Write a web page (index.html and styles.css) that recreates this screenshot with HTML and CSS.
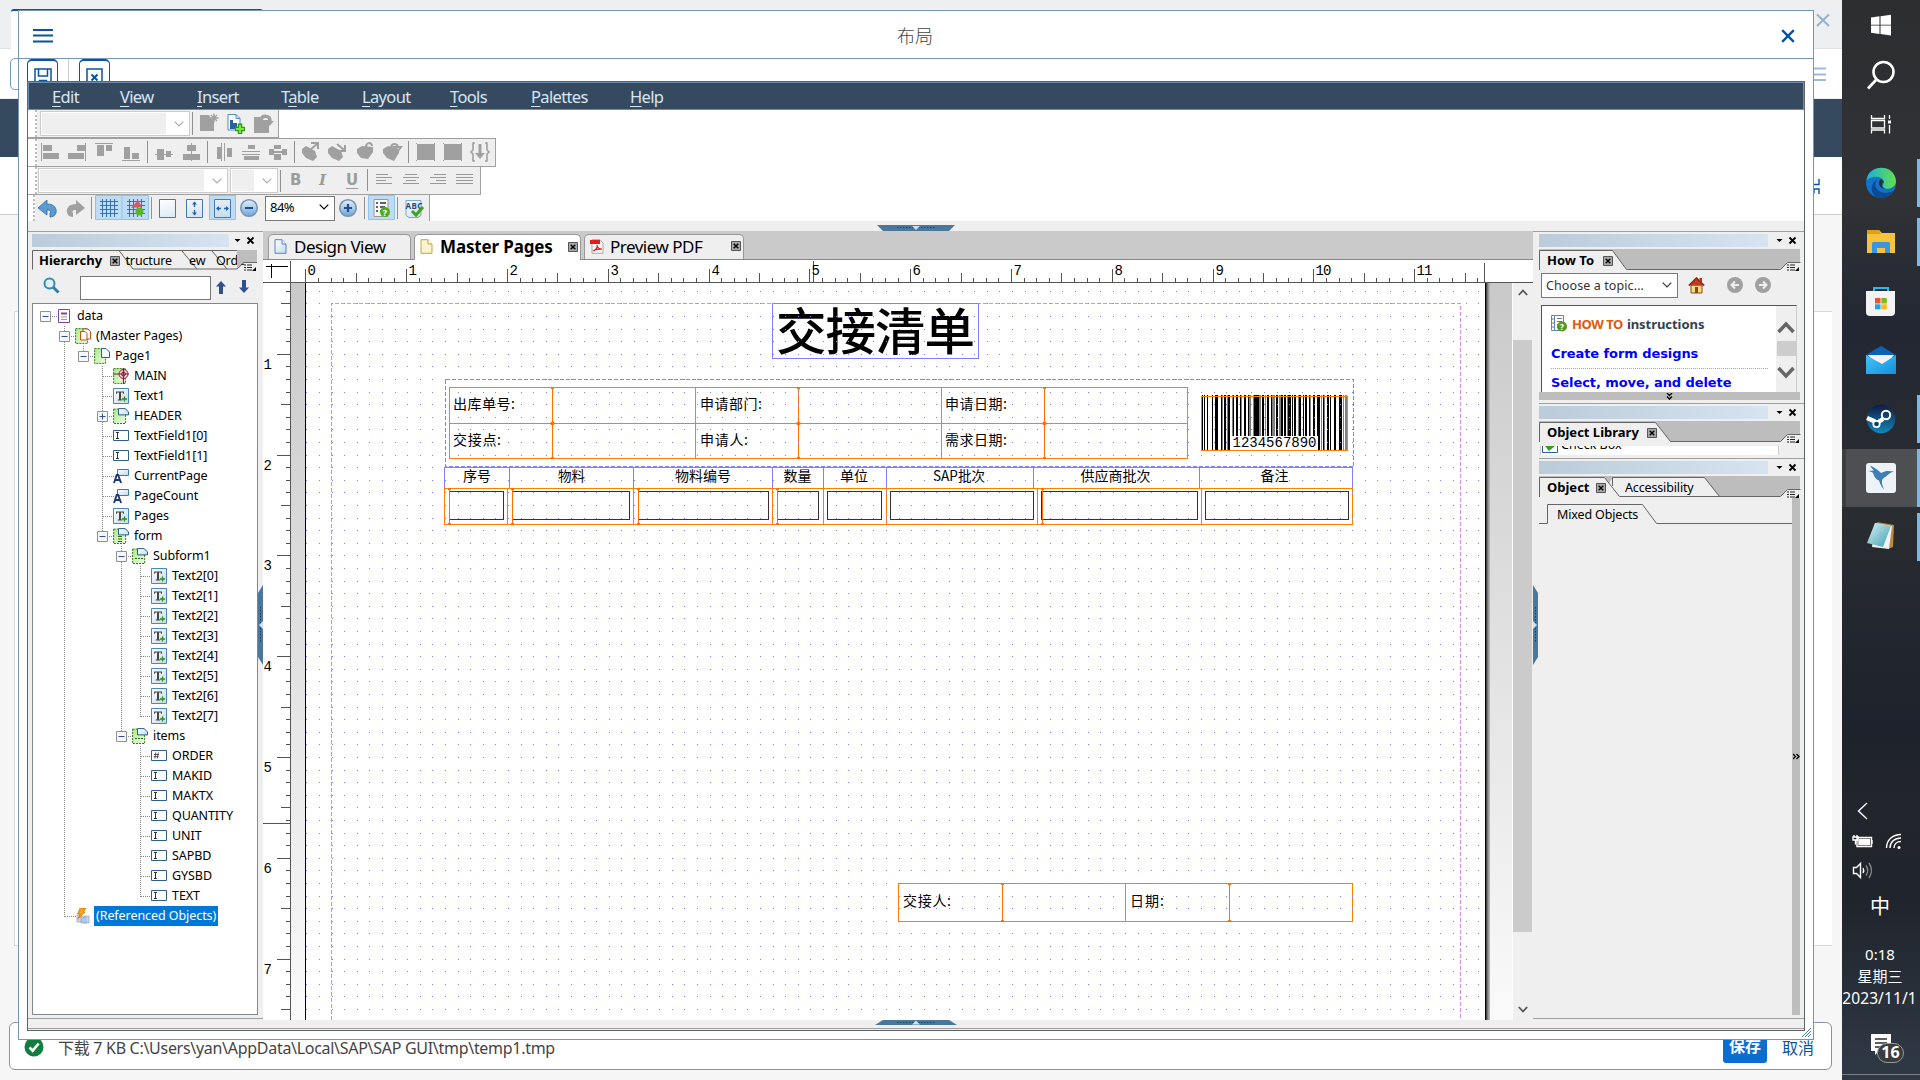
FILE: index.html
```html
<!DOCTYPE html>
<html lang="zh-CN">
<head>
<meta charset="utf-8">
<title>布局</title>
<link rel="stylesheet" href="styles.css">
</head>
<body>
<svg class="defs" width="0" height="0" aria-hidden="true">
  <defs>
    <linearGradient id="gBlue" x1="0" y1="0" x2="1" y2="1"><stop offset="0" stop-color="#fff"/><stop offset="1" stop-color="#c3daef"/></linearGradient>
    <linearGradient id="gBall" x1="0" y1="0" x2="0" y2="1"><stop offset="0" stop-color="#e4f0fa"/><stop offset="1" stop-color="#6fa5d4"/></linearGradient>
    <linearGradient id="gGreen" x1="0" y1="0" x2="1" y2="1"><stop offset="0" stop-color="#a8ec86"/><stop offset="1" stop-color="#f0fbe8"/></linearGradient>
    <linearGradient id="gPad" x1="0" y1="0" x2="0" y2="1"><stop offset="0" stop-color="#c9c9c9"/><stop offset="1" stop-color="#fafafa"/></linearGradient>
    <linearGradient id="gEdge" x1="0" y1="0" x2="1" y2="0"><stop offset="0" stop-color="#1bb0d8"/><stop offset="1" stop-color="#62e14b"/></linearGradient>
    <linearGradient id="gSteam" x1="0" y1="0" x2="0" y2="1"><stop offset="0" stop-color="#101b45"/><stop offset="1" stop-color="#1387b8"/></linearGradient>
    <linearGradient id="gMail" x1="0" y1="0" x2="1" y2="1"><stop offset="0" stop-color="#45c3f5"/><stop offset="1" stop-color="#1490df"/></linearGradient>
    <linearGradient id="gNote" x1="0" y1="0" x2="1" y2="1"><stop offset="0" stop-color="#d9f2f5"/><stop offset="1" stop-color="#3c9fb0"/></linearGradient>
  </defs>
  <symbol id="i-data" viewBox="0 0 16 16"><path d="M2.500 1.500h11v13h-11z" fill="#fff" stroke="#8b3fae"/><path d="M5 4.500h6v2H5z" fill="#8b3fae"/><path d="M5 9h6M5 11.500h6" stroke="#999"/></symbol>
  <symbol id="i-masters" viewBox="0 0 16 16"><path d="M.600.600h12v14.800H.600z" fill="url(#gGreen)" stroke="#3a7a1c" stroke-dasharray="2 1"/><path d="M8 1h5l2.500 2.500V11H8z" fill="#fff" stroke="#c8500a"/><path d="M5.500 3.500h4.500l2 2V12H5.500z" fill="#fff" stroke="#c8500a"/></symbol>
  <symbol id="i-page" viewBox="0 0 16 16"><path d="M.600.600h11v14.800H.600z" fill="url(#gGreen)" stroke="#3a7a1c" stroke-dasharray="2 1"/><path d="M7.500.500h4.500l3.500 3.500v5.500h-8z" fill="#f2f8fe" stroke="#2a5f93"/></symbol>
  <symbol id="i-main" viewBox="0 0 16 16"><path d="M.600.600h12v14.800H.600z" fill="url(#gGreen)" stroke="#3a7a1c" stroke-dasharray="2 1"/><circle cx="10.500" cy="6" r="4.500" fill="#f6d5de" stroke="#8c1c3e"/><circle cx="10.500" cy="6" r="2" fill="none" stroke="#8c1c3e"/><path d="M0 6h16M10.500 0v16" stroke="#8c1c3e" stroke-width="1.200"/></symbol>
  <symbol id="i-text" viewBox="0 0 16 16"><path d="M.500.500h15v15H.500z" fill="url(#gBlue)" stroke="#4a86bd"/><path d="M3 3.500h8v2.300h-.9L9.700 4.600H8v7h1.200v1H4.800v-1H6v-7H4.300l-.4 1.200H3z" fill="#4b4640"/><path d="M11.500 8.500v5M9 11h5" stroke="#2d8c1a" stroke-width="1.300"/></symbol>
  <symbol id="i-sub" viewBox="0 0 16 16"><path d="M.600 1.100h12v14.400H.600z" fill="url(#gGreen)" stroke="#3a7a1c" stroke-dasharray="2 1"/><path d="M5.500.600h6.500l3.500 3.200v3.100h-10z" fill="url(#gBlue)" stroke="#2a5f93"/></symbol>
  <symbol id="i-form" viewBox="0 0 16 16"><use href="#i-sub"/><path d="M5 8.500h4M5 11h4M5 13.500h4" stroke="#2c6a14"/></symbol>
  <symbol id="i-flow" viewBox="0 0 16 16"><use href="#i-sub"/><path d="M3 10.500h8" stroke="#2c6a14" stroke-dasharray="2 1"/></symbol>
  <symbol id="i-field" viewBox="0 0 16 16"><path d="M.500 2.500h15v10H.500z" fill="#fff" stroke="#2f5f8f"/><path d="M3 4.500h3M4.500 4.500v6M3 10.500h3" stroke="#333" fill="none"/></symbol>
  <symbol id="i-num" viewBox="0 0 16 16"><path d="M.500 2.500h15v10H.500z" fill="#fff" stroke="#2f5f8f"/><path d="M4.800 4.500l-1 6M7.300 4.500l-1 6M3 6.500h5M2.700 8.700h5" stroke="#333" stroke-width=".8"/></symbol>
  <symbol id="i-cur" viewBox="0 0 16 16"><path d="M4.500 1.500h11v6h-11z" fill="url(#gBlue)" stroke="#3b7f9f"/><path d="M1 15l2.700-8h1.400l3 8M2 12h5" stroke="#1f3a72" stroke-width="1.900" fill="none"/></symbol>
  <symbol id="i-ref" viewBox="0 0 16 16"><path d="M2 7h5v7H2zM6 9h5v6H6zM9 8h5v7H9z" fill="#c9d6ee" stroke="#8ea3c9" stroke-width=".7"/><path d="M5 0h6L8.500 4H10L3 11l2-5H2.500z" fill="#f5a11c" stroke="#c26a08" stroke-width=".6"/></symbol>
  <symbol id="i-cross" viewBox="0 0 9 9"><path d="M1.500 1.500l6 6M7.500 1.500l-6 6" stroke="#000" stroke-width="1.800"/></symbol>
  <symbol id="i-xbox" viewBox="0 0 10 10"><path d="M.500.500h9v9h-9z" fill="#a9a9a9" stroke="#555"/><path d="M2.700 2.700l4.600 4.600M7.300 2.700L2.700 7.300" stroke="#000" stroke-width="1.500"/></symbol>
  <symbol id="i-list" viewBox="0 0 14 8"><path d="M1 1h2M1 3.500h2M1 6h2M4 1h5M4 3.500h5M4 6h5" stroke="#222"/><path d="M13 3v4H9z" fill="#000"/></symbol>
  <symbol id="i-chev" viewBox="0 0 10 6"><path d="M.7.7L5 5 9.300.7" fill="none" stroke="currentColor" stroke-width="1.200"/></symbol>
  <symbol id="i-doc" viewBox="0 0 13 15"><path d="M1 .700h7L12 5v9.300H1z" fill="url(#gBlue)" stroke="#5a80c8"/><path d="M8 .700V5h4" fill="#fff" stroke="#5a80c8"/></symbol>
</svg>

<div class="sap">
  <div class="sap-top"></div>
  <div class="sap-tab"></div>
  <div class="sap-tools"></div>
  <div class="sap-dark"></div>
  <div class="sap-white"></div>
  <div class="sap-body"><div class="sap-panel"></div></div>
  <div class="sap-btn"></div>
  <svg class="sap-right" width="28" height="220" viewBox="0 0 28 220"><path d="M3 14.500l12 11.500M15 14.500L3 26" stroke="#93b2d6" stroke-width="2"/><path d="M0 68.500h12M0 74.500h12M0 80h12" stroke="#9dbad9" stroke-width="2"/><path d="M0 184.500h5M5 179v6M0 193.500v-4.500h5v5" stroke="#0854a0" stroke-width="1.400" fill="none"/></svg>
  <div class="sap-pager left"><svg width="8" height="10" viewBox="0 0 8 10"><path d="M6 1.500L2.500 5 6 8.500" fill="none" stroke="#0854a0" stroke-width="1.800"/></svg></div>
  <div class="sap-pager right"><svg width="8" height="10" viewBox="0 0 8 10"><path d="M2 1.500L5.500 5 2 8.500" fill="none" stroke="#0854a0" stroke-width="1.800"/></svg></div>
  <footer class="message-bar">
    <svg width="20" height="20" viewBox="0 0 20 20"><circle cx="10" cy="10" r="9.500" fill="#107e3e"/><path d="M5.500 10.500l3.200 3.200 6-7.200" fill="none" stroke="#fff" stroke-width="2.600"/></svg>
    <span class="message-text">下载 7 KB C:\Users\yan\AppData\Local\SAP\SAP GUI\tmp\temp1.tmp</span>
    <span class="save">保存</span><span class="cancel">取消</span>
  </footer>
</div>

<main class="dialog">
  <header class="dialog-title">
    <svg width="20" height="14" viewBox="0 0 20 14"><path d="M0 1h20M0 6.500h20M0 12.500h20" stroke="#0854a0" stroke-width="2"/></svg>
    <h1>布局</h1>
    <svg width="14" height="14" viewBox="0 0 14 14"><path d="M1.200 1.200l11.600 11.600M12.800 1.200L1.200 12.800" stroke="#0854a0" stroke-width="2.400"/></svg>
  </header>
  <div class="dialog-tools">
    <span class="tool-btn"><svg width="18" height="19" viewBox="0 0 18 19"><path d="M1 1h16v18H4L1 16zM4.500 1v7h9V1M5.500 19v-6.500h7V19M8.500 15v4" fill="none" stroke="#0854a0" stroke-width="1.500"/></svg></span>
    <i></i>
    <span class="tool-btn"><svg width="17" height="19" viewBox="0 0 17 19"><path d="M1 1h15v18H1z" fill="none" stroke="#0854a0" stroke-width="1.500"/><path d="M5.500 6.500l6 6M11.500 6.500l-6 6" stroke="#0854a0" stroke-width="2"/></svg></span>
  </div>

  <section class="designer">
    <nav class="menubar">
      <span><u>E</u>dit</span><span><u>V</u>iew</span><span><u>I</u>nsert</span><span>T<u>a</u>ble</span><span><u>L</u>ayout</span><span><u>T</u>ools</span><span><u>P</u>alettes</span><span><u>H</u>elp</span>
    </nav>

    <div class="bars">
      <div class="bar bar-1">
        <i class="grip"></i>
        <span class="combo off w150"><svg width="10" height="6"><use href="#i-chev"/></svg></span>
        <svg class="bar-art" width="84" height="27" viewBox="192 110 84 27">
          <path d="M192.500 112v23" stroke="#909090"/>
          <path d="M200 115h9l2 4h3v12h-14z" fill="#a0a0a0"/><path d="M214 113.500v9M209.500 118h9M211 115l6 6M217 115l-6 6" stroke="#a0a0a0" stroke-width="1.400"/>
          <path d="M228 114.500h8l4 4V130h-12z" fill="#fff" stroke="#4a8cc4"/><path d="M236 114.500v4h4" fill="none" stroke="#4a8cc4"/><path d="M230 120h3v3h4v6h-7z" fill="#2a62a0"/><path d="M240 123.500v10.500M235 129h10" stroke="#2c9a12" stroke-width="4.500"/><path d="M240 125v8M236 129h8" stroke="#7fe24d" stroke-width="2"/>
          <path d="M254 117h6l2 3h7v13h-15z" fill="#a0a0a0"/><path d="M261 120c1-5 9-5 9 1" fill="none" stroke="#a0a0a0" stroke-width="3.500"/><path d="M265 121h9l-4.500 5z" fill="#a0a0a0"/>
        </svg>
      </div>
      <div class="bar bar-2">
        <i class="grip"></i>
        <svg class="bar-art" width="456" height="28" viewBox="39 138 456 28">
          <g fill="#a0a0a0">
            <path d="M41 143h1v18h-1zM43 145h9v6h-9zM43 153h16v6H43zM85 143h1v18h-1zM77 145h8v6h-8zM68 153h16v6H68zM95 143h18v1H95zM97 145h7v11h-7zM106 145h6v6h-6zM122 160h18v1h-18zM124 147h6v12h-6zM132 153h7v6h-7zM155 154h18v1h-18zM157 149h7v11h-7zM166 151h5v6h-5zM191 143h1v18h-1zM187 145h9v6h-9zM183 154h17v6h-17zM221 143h1v18h-1zM224 143h1v18h-1zM217 147h4v12h-4zM227 148h5v9h-5zM242 151h18v1h-18zM242 154h18v1h-18zM248 145h7v4h-7zM244 156h15v4h-15zM269 151h18v2h-18zM274 145h7v4h-7zM274 154h7v6h-7zM269 149h5v6h-5zM282 149h5v6h-5z"/>
            <path d="M302 149l4-3 9 5 2 6-4 4-7-3-4-5zM328 149l4-3 9 5 2 6-4 4-7-3-4-5zM357 149l5-3 11 1v5l-5 7-7-1-4-5zM383 149l5-3 11 3v4l-5 8-7-3-4-5z"/>
            <path d="M417 144h18v16h-18zM444 144h18v16h-18z"/>
          </g>
          <path d="M310 150l7-6M311 143h7v6M337 144l7 6M345 145v6h-6M366 147c0-5 6-5 6-1M391 147c1-4 6-4 7 0M394 147h7l-3 4z" fill="none" stroke="#a0a0a0" stroke-width="2"/>
          <path d="M416 143l3 3M435 143l-3 3M416 161l3-3M435 161l-3-3M443 143l3 3M462 143l-3 3M443 161l3-3M462 161l-3-3" stroke="#a0a0a0"/>
          <path d="M475 143h-2v7l-2 2 2 2v7h2M485 143h2v7l2 2-2 2v7h-2" fill="none" stroke="#a0a0a0" stroke-width="1.600"/><path d="M480 144v10" stroke="#a0a0a0" stroke-width="3"/><path d="M475 153h10l-5 6z" fill="#a0a0a0"/>
          <path d="M147.500 141v22M207.500 141v22M294.500 141v22M408.500 141v22" stroke="#909090"/>
        </svg>
      </div>
      <div class="bar bar-3">
        <i class="grip"></i>
        <span class="combo off w190"><svg width="10" height="6"><use href="#i-chev"/></svg></span>
        <span class="combo off w48"><svg width="10" height="6"><use href="#i-chev"/></svg></span>
        <i class="sep"></i>
        <b class="fmt">B</b><b class="fmt it">I</b><b class="fmt un">U</b>
        <svg class="bar-art" width="112" height="27" viewBox="366 167 112 27">
          <path d="M367.500 169v22" stroke="#909090"/>
          <path d="M376 174.500h12M376 177.500h16M376 180.500h10M376 183.500h16M405 174.500h12M403 177.500h16M406 180.500h10M403 183.500h16M434 174.500h12M430 177.500h16M436 180.500h10M430 183.500h16M456 174.500h17M456 177.500h17M456 180.500h17M456 183.500h17" stroke="#999"/>
        </svg>
      </div>
      <div class="bar bar-4">
        <i class="grip"></i>
        <svg class="bar-art" width="229" height="26" viewBox="36 195 229 26">
          <path d="M38 208l9-8v4c7 0 10 4 9 9-1 3-4 4-6 4v-4c1-1 1-3-3-3v5z" fill="#5b9bcf" stroke="#2c6ca8" stroke-width=".8"/>
          <path d="M85 208l-9-8v4c-7 0-10 4-9 9 1 3 4 4 6 4v-4c-1-1-1-3 3-3v5z" fill="#a0a0a0"/>
          <path d="M91.500 197v22M151.500 197v22" stroke="#909090"/>
          <path d="M95.500 195.500h53v24h-53zM209.500 195.500h26v24h-26z" fill="#bfdcf5" stroke="#90c3ef"/><path d="M122 195v25" stroke="#90c3ef"/>
          <path d="M102.500 199v18M106.500 199v18M110.500 199v18M114.500 199v18M100 201.500h18M100 205.500h18M100 209.500h18M100 213.500h18M129.500 199v18M133.500 199v18M137.500 199v18M141.500 199v18M127 201.500h18M127 205.500h18M127 209.500h18M127 213.500h18" stroke="#3673b5"/>
          <path d="M131 208l7-8 4 7z" fill="#d3596b"/><circle cx="139.500" cy="211.500" r="4" fill="#57b52d"/>
          <path d="M159.500 199.500h16v18h-16zM186.500 199.500h16v18h-16zM214.500 199.500h16v18h-16z" fill="url(#gBlue)" stroke="#4579b5"/>
          <path d="M194.500 202v5M194.500 210v5M217 208.500h4M224 208.500h4" stroke="#2a62a0" stroke-width="1.300"/><path d="M192 204.500l2.500-3 2.500 3zM192 212.500l2.500 3 2.500-3zM219 206l-3 2.500 3 2.500zM226 206l3 2.500-3 2.500z" fill="#2a62a0"/>
          <circle cx="249" cy="208" r="8.300" fill="url(#gBall)" stroke="#7793b0" stroke-width="1.500"/><path d="M245 208h8" stroke="#1f4f92" stroke-width="2"/>
        </svg>
        <span class="combo w70">84%<svg width="10" height="6"><use href="#i-chev"/></svg></span>
        <svg class="bar-art" width="92" height="26" viewBox="335 195 92 26">
          <circle cx="348" cy="208" r="8.300" fill="url(#gBall)" stroke="#7793b0" stroke-width="1.500"/><path d="M344 208h8M348 204v8" stroke="#1f4f92" stroke-width="2.200"/>
          <path d="M364.500 197v22M397.500 197v22" stroke="#909090"/>
          <path d="M368.500 195.500h26v24h-26z" fill="#bfdcf5" stroke="#90c3ef"/>
          <path d="M374 199.500h14v17h-14z" fill="#f7f7f7" stroke="#999"/><path d="M376 203h2M376 207h2M376 211h2M380 203h6M380 207h5M380 211h3" stroke="#333" stroke-width="1.400"/><circle cx="385" cy="212" r="5" fill="#4fae1c"/><text x="382.800" y="215.500" font-size="9" font-weight="700" fill="#fff">?</text>
          <path d="M406 200.500h15v15l-3 2h-9l-3-2z" fill="url(#gBlue)" stroke="#7fa6d1"/><text x="405.500" y="208.500" font-size="8" font-weight="700" fill="#244a83" textLength="17">ABC</text><path d="M412 211l4 4 7-8" fill="none" stroke="#3fa514" stroke-width="3"/>
        </svg>
      </div>
    </div>
    <div class="strip-top"><svg class="handle" width="78" height="6" viewBox="0 0 78 6"><path d="M0 0h78l-6 6H6z" fill="#4a779c"/><path d="M20 2.500h38" stroke="#1d3d5b" stroke-dasharray="1.500 1.500"/><path d="M35 1h8l-4 4z" fill="#cfe0ee"/></svg></div>

    <div class="work">
      <aside class="left">
        <div class="pal-head"><i></i><svg width="9" height="5" viewBox="0 0 9 5"><path d="M1.500 1h6l-3 3z"/></svg><svg width="9" height="9"><use href="#i-cross"/></svg></div>
        <svg class="tabs" width="226" height="21" viewBox="32 249 226 21">
          <path d="M32 250h206v13l-8 6H32z" fill="#efefef"/>
          <path d="M32.500 269.500V250.500h204.500M119 250.500l14 18.500h104l6-6.500h14" fill="none" stroke="#666"/><path d="M182 251l15 18M212 251l15 18" stroke="#666"/>
          <text x="39" y="265" class="tab-b">Hierarchy</text><use href="#i-xbox" x="110" y="256" width="10" height="10"/>
          <text x="125.500" y="265" class="tab-n">tructure</text><text x="189" y="265" class="tab-n">ew</text><text x="216" y="265" class="tab-n">Orde</text>
          <path d="M237 250h20v12h-13l-7 6z" fill="#bdbdbd"/><path d="M237 269l7-6.500h13" fill="none" stroke="#666"/><use href="#i-list" x="243" y="264" width="14" height="8"/>
        </svg>
        <div class="search">
          <svg width="17" height="17" viewBox="0 0 17 17"><path d="M10 10l5.500 5.500" stroke="#2a7da3" stroke-width="2.800"/><circle cx="6.500" cy="6.500" r="5" fill="#dff2fa" stroke="#2f8db3" stroke-width="2"/></svg>
          <span class="search-box"></span>
          <svg width="10" height="13" viewBox="0 0 10 13"><path d="M5 0l5 5.500H7V13H3V5.500H0z" fill="#2f4f8f"/></svg>
          <svg width="10" height="13" viewBox="0 0 10 13"><path d="M5 13l5-5.500H7V0H3v7.500H0z" fill="#2f4f8f"/></svg>
        </div>
        <div class="tree" id="tree"></div>
        <svg class="side-handle l" width="5" height="80" viewBox="0 0 5 80"><path d="M5 0v80L0 72V8z" fill="#4a779c"/><path d="M2.500 22v36" stroke="#1d3d5b" stroke-dasharray="1.500 1.500"/><path d="M5 36v8l-4-4z" fill="#cfe0ee"/></svg>
      </aside>

      <section class="center">
        <div class="doc-tabs">
          <div class="doc-tab t1"><svg width="13" height="15"><use href="#i-doc"/></svg><span>Design View</span></div>
          <div class="doc-tab t2 active"><svg class="gold" width="13" height="15" viewBox="0 0 13 15"><path d="M1 .700h7L12 5v9.300H1z" fill="#fbf3cf" stroke="#c2a34c"/><path d="M8 .700V5h4" fill="#fff" stroke="#c2a34c"/></svg><b>Master Pages</b><svg width="10" height="10"><use href="#i-xbox"/></svg></div>
          <div class="doc-tab t3"><svg width="14" height="15" viewBox="0 0 14 15"><path d="M2 .700h8L13 4v10.300H2z" fill="#f6f6f6" stroke="#aaa"/><path d="M0 1h10v4H0z" fill="#e01c1c"/><path d="M3 12c3-1 5-4 4-6 0 3 3 4 5 4-3 0-6 0-9 2z" fill="none" stroke="#d11" stroke-width="1.100"/></svg><span>Preview PDF</span><svg width="10" height="10"><use href="#i-xbox"/></svg></div>
        </div>
        <svg id="hruler" width="1270" height="23" viewBox="263 260 1270 23" shape-rendering="crispEdges"></svg>
        <div class="canvas-row">
          <svg id="canvas" width="1250" height="737" viewBox="263 283 1250 737" shape-rendering="crispEdges"></svg>
          <div class="vscroll"><svg width="10" height="7" viewBox="0 0 10 7"><path d="M.800 6L5 1.500 9.200 6" fill="none" stroke="#555" stroke-width="1.800"/></svg><i></i><svg width="10" height="7" viewBox="0 0 10 7"><path d="M.800 1L5 5.500 9.200 1" fill="none" stroke="#555" stroke-width="1.800"/></svg></div>
        </div>
      </section>

      <aside class="right">
        <section class="pal howto">
          <div class="pal-head"><i></i><svg width="9" height="5" viewBox="0 0 9 5"><path d="M1.500 1h6l-3 3z"/></svg><svg width="9" height="9"><use href="#i-cross"/></svg></div>
          <svg class="tabs" width="261" height="22" viewBox="1539 249 261 22">
            <path d="M1539 249h261v13h-12l-7 7h-242z" fill="#bdbdbd"/><path d="M1539.500 270v-19.500h73l14 19h154l7-7h13V272h-261z" fill="#efefef"/><path d="M1539.500 270v-19.500h73l14 19h154l7-7h13" fill="none" stroke="#666"/>
            <text x="1547" y="265" class="tab-b">How To</text><use href="#i-xbox" x="1603" y="256" width="10" height="10"/><use href="#i-list" x="1786" y="264" width="14" height="8"/>
          </svg>
          <div class="topic">
            <span class="combo w136">Choose a topic...<svg width="10" height="6"><use href="#i-chev"/></svg></span>
            <svg width="17" height="17" viewBox="0 0 17 17"><path d="M3 8h11v8H3z" fill="#f8d984" stroke="#8a4a12"/><path d="M.800 8.500L8.500 1l7.700 7.500" fill="#c23b1e" stroke="#8e2412" stroke-width="1.500"/><path d="M11.500 1h2.500v4h-2.500z" fill="#b5331a"/><path d="M7 10h3v6H7z" fill="#8a4a12"/></svg>
            <svg width="16" height="16" viewBox="0 0 16 16"><circle cx="8" cy="8" r="8" fill="#a0a0a0"/><path d="M12 8H5M8 4.500L4.500 8 8 11.500" fill="none" stroke="#efefef" stroke-width="2"/></svg>
            <svg width="16" height="16" viewBox="0 0 16 16"><circle cx="8" cy="8" r="8" fill="#a0a0a0"/><path d="M4 8h7M8 4.500L11.500 8 8 11.500" fill="none" stroke="#efefef" stroke-width="2"/></svg>
          </div>
          <div class="help">
            <div class="help-list">
              <p class="help-title"><svg width="17" height="17" viewBox="0 0 17 17"><path d="M.500.500h12v15H.500z" fill="#fff" stroke="#5c84c4"/><path d="M3.500 1v14" stroke="#5c84c4"/><path d="M6 3.500h5M6 6.500h5M6 9.500h3M6 12.500h3M1 4h2M1 8h2M1 12h2" stroke="#777"/><circle cx="11" cy="11.500" r="5" fill="#4f9a1c"/><text x="8.700" y="15" font-size="9" font-weight="700" fill="#fff">?</text></svg><b>HOW TO</b> <strong>instructions</strong></p>
              <a>Create form designs</a><a class="a2">Select, move, and delete</a>
            </div>
            <div class="help-scroll"><svg width="18" height="13" viewBox="0 0 18 13"><path d="M1.500 11L9 3l7.500 8" fill="none" stroke="#666" stroke-width="3.500"/></svg><i></i><svg width="18" height="13" viewBox="0 0 18 13"><path d="M1.500 2L9 10l7.500-8" fill="none" stroke="#666" stroke-width="3.500"/></svg></div>
          </div>
          <div class="more"><svg width="7" height="7" viewBox="0 0 7 7"><path d="M1 0l2.500 2.500L6 0M1 3.500L3.500 6 6 3.500" fill="none" stroke="#000" stroke-width="1.300"/></svg></div>
        </section>
        <section class="pal library">
          <div class="pal-head"><i></i><svg width="9" height="5" viewBox="0 0 9 5"><path d="M1.500 1h6l-3 3z"/></svg><svg width="9" height="9"><use href="#i-cross"/></svg></div>
          <svg class="tabs" width="261" height="22" viewBox="1539 249 261 22">
            <path d="M1539 249h261v13h-12l-7 7h-242z" fill="#bdbdbd"/><path d="M1539.500 270v-19.500h116l15 19h110l7-7h13V272h-261z" fill="#efefef"/><path d="M1539.500 270v-19.500h116l15 19h110l7-7h13" fill="none" stroke="#666"/>
            <text x="1547" y="265" class="tab-b">Object Library</text><use href="#i-xbox" x="1647" y="256" width="10" height="10"/><use href="#i-list" x="1786" y="264" width="14" height="8"/>
          </svg>
          <div class="lib-list"><svg width="16" height="16" viewBox="0 0 16 16"><path d="M.500.500h15v15H.500z" fill="#fff" stroke="#2a62a0"/><path d="M3 9h10l-6 5z" fill="#3c9a1c"/></svg><span>Check Box</span></div>
        </section>
        <section class="pal object">
          <div class="pal-head"><i></i><svg width="9" height="5" viewBox="0 0 9 5"><path d="M1.500 1h6l-3 3z"/></svg><svg width="9" height="9"><use href="#i-cross"/></svg></div>
          <svg class="tabs" width="261" height="22" viewBox="1539 249 261 22">
            <path d="M1539 249h261v13h-12l-7 7h-242z" fill="#bdbdbd"/><path d="M1613 250.500h91l15 19H1600z" fill="#efefef"/><path d="M1539.500 270v-19.500h65l14 19h162l7-7h13V272h-261z" fill="#efefef"/><path d="M1612.500 259v-8.500h92l15 19M1539.500 270v-19.500h65l15 19h161l7-7h13" fill="none" stroke="#666"/>
            <text x="1547" y="265" class="tab-b">Object</text><use href="#i-xbox" x="1596" y="256" width="10" height="10"/><text x="1625" y="265" class="tab-n">Accessibility</text><use href="#i-list" x="1786" y="264" width="14" height="8"/>
          </svg>
          <div class="object-body">
            <svg width="253" height="26" viewBox="1539 498 253 26"><path d="M1539 523.500h8.500v-19h95l14 19H1792" fill="none" stroke="#666"/><text x="1557" y="519" class="tab-n">Mixed Objects</text></svg>
            <div class="object-bar"><svg width="7" height="7" viewBox="0 0 7 7"><path d="M0 1l2.500 2.500L0 6M3.500 1L6 3.500 3.500 6" fill="none" stroke="#000" stroke-width="1.300"/></svg></div>
          </div>
        </section>
        <svg class="side-handle r" width="5" height="80" viewBox="0 0 5 80"><path d="M0 0v80l5-8V8z" fill="#4a779c"/><path d="M2.500 22v36" stroke="#1d3d5b" stroke-dasharray="1.500 1.500"/><path d="M0 36v8l4-4z" fill="#cfe0ee"/></svg>
      </aside>
    </div>
    <div class="strip-bottom"><svg class="handle" width="82" height="5" viewBox="0 0 82 5"><path d="M8 0h66l8 5H0z" fill="#4a779c"/><path d="M22 2.500h38" stroke="#1d3d5b" stroke-dasharray="1.500 1.500"/><path d="M37 4.500h8l-4-4z" fill="#cfe0ee"/></svg></div>
  </section>
  <svg class="resize" width="9" height="9" viewBox="0 0 9 9"><path d="M0 9l9-9M3 9l6-6M6 9l3-3" stroke="#3f7db8"/></svg>
</main>

<aside class="taskbar">
  <div class="task active-task"></div>
  <i class="run r1"></i><i class="run r2"></i><i class="run r3"></i><i class="run r4"></i><i class="run r5"></i>
  <svg class="task-icons" width="78" height="560" viewBox="1842 0 78 560">
    <path d="M1871 17.500l8.500-1.200v8.400h-8.500zM1880.500 16.200l10.500-1.500v10h-10.500zM1871 25.600h8.500v8.400l-8.500-1.200zM1880.500 25.600H1891v10l-10.500-1.500z" fill="#fff"/>
    <circle cx="1883.500" cy="72" r="10" fill="none" stroke="#fff" stroke-width="2.600"/><path d="M1876 80l-8 8.500" stroke="#fff" stroke-width="2.800"/>
    <path d="M1871.500 115v3.500h13V115M1871.500 133.500V130h13v3.500M1871.500 120.500h13v7.500h-13zM1889.500 115v4M1889.500 125v8.500" fill="none" stroke="#fff" stroke-width="1.300"/><path d="M1888 120.500h3v3h-3z" fill="#fff"/>
    <circle cx="1881" cy="183" r="15" fill="#1173c8"/><path d="M1866.500 180c2-16 28-17 29.500 1 0 9-14 10-13 4 4-6-6-12-16.500-5z" fill="url(#gEdge)"/><path d="M1877 180c-5 6 2 17 16 11-4 7-12 8-17 6-6-4-6-14 1-17z" fill="#0d4a96"/><path d="M1881 179c-4 3-2 9 4 10-3-1-5-5-1-7z" fill="#2b2e31"/>
    <path d="M1867 230h12l3 3h13v20h-28z" fill="#f8c33b"/><path d="M1867 230h12l2 4h-14z" fill="#e0a010"/><path d="M1872 253v-9.500q0-1.500 1.500-1.500h15q1.500 0 1.500 1.500V253h-5v-5h-8v5z" fill="#3a96e0"/>
    <path d="M1874 292v-4h14v4" fill="none" stroke="#32b4ea" stroke-width="2"/><path d="M1866 291h29v21q0 4-4 4h-21q-4 0-4-4z" fill="#f3f3f3"/><path d="M1875 298h5.500v5.500h-5.500z" fill="#f0522a"/><path d="M1881.300 298h5.500v5.500h-5.500z" fill="#7eba1e"/><path d="M1875 304.300h5.500v5h-5.500z" fill="#1ba5ea"/><path d="M1881.300 304.300h5.500v5h-5.500z" fill="#fdb813"/>
    <path d="M1866 355l15-9 15 9v5h-30z" fill="#0a63b5"/><path d="M1868 355h26l-9 11h-8z" fill="#f2f2f2"/><path d="M1866 355l16 9 14-9v19h-30z" fill="url(#gMail)"/>
    <circle cx="1881" cy="419" r="14.300" fill="url(#gSteam)"/><circle cx="1886" cy="415" r="4.200" fill="none" stroke="#fff" stroke-width="2"/><path d="M1867 418l8 3.500M1877 423l6-4" stroke="#fff" stroke-width="4.500"/><circle cx="1876.500" cy="424" r="3.200" fill="#123c6c" stroke="#fff" stroke-width="1.700"/>
    <rect x="1866" y="463" width="30" height="30" rx="3" fill="#eef3f9"/><path d="M1868 471l6-.5c-2-2-3-3-4-5 4 2 8 4 11 7.500 4-2.500 8-2.500 13-1.500-4 1-4 2-7 4-2 2-4 2-5 5-.5 3 .5 5 2 9-3-3-4-6-5-9-3-1-5-4-6-7.500-1-1.500-3-1.500-5-2z" fill="#3f7fb5"/>
    <path d="M1877 522l17 3-1 22-5 2z" fill="#b98a3f"/><path d="M1875 523l17 3-3 23-17-2z" fill="#f2f2f2"/><path d="M1875 523l16 3-8 21-16-4z" fill="url(#gNote)"/>
  </svg>
  <svg class="tray" width="78" height="90" viewBox="1842 795 78 90" fill="none" stroke="#fff" stroke-width="1.400">
    <path d="M1867 803l-8.500 8 8.500 8"/><path d="M1857 837.500h14.500v9H1857zM1872 840v4"/><path d="M1859 839.500h10.500v5H1859z" fill="#fff"/><path d="M1853 837h5v3h-5zM1855.500 840v4.500M1854 835v2M1857 835v2"/>
    <path d="M1886.500 848c0-8 6-13.500 14.500-13.500M1890 848c0-6 4.500-10 11-10M1894 848c0-4 3-6.500 7-6.500"/><circle cx="1899" cy="847.500" r="1.500" fill="#fff" stroke="none"/>
    <path d="M1853.500 867.500h3l4-4v14l-4-4h-3zM1863 868q1.500 2.500 0 5"/><path d="M1866 865.500q3.500 5 0 10M1869 863q5 7.500 0 15" stroke="#888"/>
  </svg>
  <span class="ime">中</span>
  <div class="clock"><span>0:18</span><span>星期三</span><span class="date">2023/11/1</span></div>
  <svg class="notice" width="20" height="21" viewBox="0 0 20 21"><path d="M0 0h20v17H8l-4 4v-4H0z" fill="#fff"/><path d="M4 5h12M4 9h12M4 13h7" stroke="#2a2d30" stroke-width="1.500"/></svg>
  <span class="badge">16</span>
</aside>
<script src="app.js"></script>
</body>
</html>
```
FILE: styles.css
```css
* { box-sizing: border-box; }
html { overflow: hidden; }
body { margin: 0; width: 1920px; height: 1080px; overflow: hidden; position: relative; background: #f6f6f6; font-family: "Noto Sans", "Noto Sans CJK SC", sans-serif; font-size: 12.5px; color: #000; }
svg { display: block; flex: none; }
.defs { position: absolute; }

/* application window behind the dialog */
.sap { position: absolute; left: 0; top: 0; width: 1842px; height: 1080px; display: flex; flex-direction: column; }
.sap > div { flex: none; }
.sap-top { height: 49px; background: #edeff0; border-bottom: 1px solid #e0e2e4; }
.sap-tab { position: absolute; left: 11px; top: 9px; width: 252px; height: 50px; background: #fff; border-top: 2px solid #0854a0; border-radius: 3px 3px 0 0; }
.sap-tools { height: 50px; background: #fff; border-bottom: 1px solid #eee; }
.sap-dark { height: 58px; background: #354a5f; }
.sap-white { height: 58px; background: #fff; border-bottom: 1px solid #ccc; }
.sap-body { height: 807px; padding: 96px 10px 0 14px; }
.sap-panel { height: 635px; border: 1px solid #d9d9d9; border-right: 0; background: #fff; }
.sap-btn { position: absolute; left: 10px; top: 58px; width: 40px; height: 32px; border: 1px solid #6f9bcb; border-radius: 5px; }
.sap-right { position: absolute; left: 1814px; top: 0; }
.sap-pager { position: absolute; top: 1002px; width: 18px; height: 14px; background: #fff; display: flex; align-items: center; padding-left: 3px; }
.sap-pager.left { left: 9px; }
.sap-pager.right { left: 1814px; padding-left: 6px; }
.message-bar { position: absolute; left: 9px; top: 1022px; width: 1823px; height: 48px; border: 1px solid #8a939c; border-radius: 6px; background: #fff; display: flex; align-items: center; padding: 1px 17px 0 14px; }
.message-text { margin-left: 14px; font-size: 16px; letter-spacing: -.29px; color: #444; flex: 1; }
.save { width: 44px; height: 32px; border-radius: 3px; background: #0a6ed1; color: #fff; font-weight: 700; font-size: 16px; line-height: 31px; text-align: center; }
.cancel { color: #0854a0; font-size: 16px; margin-left: 15px; }

/* dialog */
.dialog { position: absolute; left: 18px; top: 10px; width: 1796px; height: 1030px; border: 1px solid #7596b8; background: #fff; }
.dialog-title { height: 48px; border-bottom: 1px solid #7596b8; display: flex; align-items: center; padding: 3px 18px 0 14px; }
.dialog-title h1 { flex: 1; margin: 0 4px 0 0; text-align: center; font-size: 18px; line-height: 24px; font-weight: 300; color: #444; }
.dialog-tools { height: 22px; overflow: hidden; display: flex; padding-left: 8px; }
.tool-btn { width: 31px; height: 32px; flex: none; border: 1px solid #0854a0; border-top-width: 2px; border-radius: 5px; padding: 7px 0 0 6px; }
.dialog-tools i { width: 1px; background: #d0d0d0; margin: 0 10px 0 10px; }
.designer { margin-left: 8px; width: 1778px; height: 950px; border: 1px solid #5f6467; background: #efefef; display: flex; flex-direction: column; }
.resize { position: absolute; right: 2px; bottom: 2px; }

.menubar { height: 28px; flex: none; background: #354a5f; border: 1px solid #6e8cb0; display: grid; grid-template-columns: 68px 77px 84px 81px 88px 81px 99px 1fr; padding: 1px 0 0 23px; font-size: 16.5px; line-height: 25px; letter-spacing: -.65px; color: #d7e6f8; }
.menubar u { text-underline-offset: 3px; text-decoration-thickness: 1px; }

.bars { height: 111px; flex: none; background: #fff; display: flex; flex-direction: column; align-items: flex-start; }
.bar { background: #efefef; border-right: 1px solid #a0a0a0; border-bottom: 1px solid #a0a0a0; display: flex; align-items: center; }
.bar-1 { height: 28px; width: 251px; }
.bar-2 { height: 29px; width: 468px; border-top: 1px solid #a0a0a0; }
.bar-2 .bar-art { margin-top: -2px; }
.bar-3 { height: 28px; width: 453px; }
.bar-3 .bar-art { margin-top: -1px; }
.bar-4 { height: 26px; width: 402px; border-bottom: 0; }
.grip { width: 9px; height: 100%; flex: none; background: #fff; border-right: 2px dotted #bbb; margin-right: 3px; }
.bar-2 .grip { margin-right: 2px; }
.bar-3 .grip { margin-right: 1px; }
.bar-4 .grip { width: 7px; margin-right: 1px; }
.combo { height: 25px; flex: none; border: 1px solid #777; background: #fff; display: flex; align-items: center; justify-content: space-between; padding: 0 5px 0 4px; color: #333; }
.combo.off { border: 1px solid #ccc; color: #aaa; }
.combo.off::before { content: ""; height: 21px; flex: 1; background: #efefef; margin: 0 8px 0 -3px; }
.w150 { width: 150px; margin-right: 2px; }
.w190 { width: 190px; margin-right: 2px; }
.w48 { width: 48px; }
.w70 { width: 70px; color: #000; letter-spacing: -.5px; font-size: 13px; line-height: 20px; padding-bottom: 2px; }
.sep { width: 1px; height: 22px; background: #909090; margin: 0 9px 0 2px; }
.fmt { width: 28px; margin-top: -2px; font: 700 15px/18px "DejaVu Sans", sans-serif; color: #9c9c9c; }
.fmt.it { font-family: "DejaVu Serif", serif; font-style: italic; padding-left: 1px; }
.fmt.un { text-decoration: underline; text-underline-offset: 3px; width: 20px; }
.strip-top { height: 10px; flex: none; display: flex; align-items: flex-end; padding: 0 0 0 849px; }

.work { height: 789px; flex: none; display: grid; grid-template-columns: 235px 1270px 271px; }
.left, .right { position: relative; border-top: 1px solid #a0a0a0; border-bottom: 1px solid #a0a0a0; height: 788px; }
.left { padding: 2px 5px 0 4px; }
.pal-head { height: 13px; display: flex; align-items: center; gap: 4px; }
.pal-head i { height: 13px; flex: 1; background: linear-gradient(90deg, #bccbd9, #d6e4f1); }
.left .pal-head { padding-right: 3px; }
.tabs { margin-top: 2px; overflow: visible; }
.tab-b { font: 700 13px "Noto Sans", sans-serif; }
.tab-n { font: 12.5px "Noto Sans", sans-serif; letter-spacing: -.15px; }
.search { height: 33px; display: flex; align-items: center; padding: 0 9px 0 11px; }
.search-box { width: 131px; height: 24px; border: 1px solid #777; background: #fff; margin: 3px 5px 0 20px; }
.search svg:nth-child(1) { margin-top: -2px; }
.search svg:nth-child(3) { margin: 1px 13px 0 0; }
.tree { position: relative; height: 712px; width: 226px; border: 1px solid #828790; background: #fff; padding-top: 2px; }
.tree-lines { position: absolute; left: 0; top: 1px; }
.row { height: 20px; display: flex; align-items: center; position: relative; white-space: nowrap; letter-spacing: -.07px; }
.row .exp { width: 11px; height: 11px; margin-right: 5px; flex: none; }
.row .txt { margin-left: 3px; padding: 0 2px; line-height: 20px; }
.row.sel .txt { background: #0078d7; color: #fff; }
.d0 { padding-left: 7px; } .d1 { padding-left: 26px; } .d2 { padding-left: 45px; } .d3 { padding-left: 64px; } .d4 { padding-left: 83px; } .d5 { padding-left: 102px; }
.side-handle { position: absolute; top: 353px; }
.side-handle.l { right: 0; }
.side-handle.r { left: 0; }

.center { display: flex; flex-direction: column; background: #fff; }
.doc-tabs { height: 29px; background: #cacaca; border-bottom: 1px solid #888; display: flex; align-items: flex-end; padding-left: 5px; gap: 3px; }
.doc-tab { height: 25px; border: 1px solid #999; border-bottom: 0; border-radius: 5px 5px 0 0; background: #efefef; display: flex; align-items: center; padding: 0 7px 2px 5px; font-size: 17px; letter-spacing: -.5px; gap: 7px; }
.doc-tab svg:last-child:not(:first-child) { margin-left: auto; }
.doc-tab.active { background: #fff; height: 26px; margin-bottom: -1px; }
.t1 { width: 143px; } .t2 { width: 167px; padding-right: 2px; } .t3 { width: 160px; padding-right: 2px; gap: 6px; }
.t2 b { letter-spacing: -.15px; }
.canvas-row { display: flex; height: 737px; }
.vscroll { width: 20px; background: #efefef; display: flex; flex-direction: column; align-items: center; padding: 6px 1px 7px 0; }
.vscroll i { width: 19px; height: 592px; background: #cbcbcb; margin: 44px 0 auto; }

.right { padding-left: 6px; }
.pal { width: 265px; border-bottom: 1px solid #a0a0a0; padding: 2px 4px 0 0; box-shadow: -6px 0 0 #efefef; }
.pal .pal-head { padding-right: 3px; }
.pal .pal-head i { margin-right: 3px; }
.howto { height: 172px; }
.topic { height: 24px; margin: 2px 0 0 2px; display: flex; align-items: center; }
.w136 { width: 137px; height: 25px; font-size: 12.5px; letter-spacing: .1px; margin-right: 10px; }
.topic svg + svg { margin-left: 22px; }
.topic svg + svg + svg { margin-left: 12px; }
.help { height: 87px; width: 256px; margin: 8px 0 0 2px; border: 1px solid #555; border-width: 1px 1px 0 1px; border-right-color: #ccc; background: #efefef; display: flex; }
.help-list { width: 234px; background: #fff; overflow: hidden; padding: 6px 8px 0 9px; }
.help-title { margin: 0 0 9px; height: 23px; font-size: 13px; display: flex; align-items: center; gap: 4px; white-space: nowrap; }
.help-title b { color: #dc5a0b; letter-spacing: -.45px; }
.help-title strong { color: #333f50; letter-spacing: -.05px; }
.help-list a { display: block; height: 25px; font: 700 13px/20px "DejaVu Sans", sans-serif; letter-spacing: -.08px; color: #00f; border-bottom: 1px dotted #aaa; white-space: nowrap; }
.help-list a.a2 { margin-top: 4px; }
.help-scroll { flex: 1; display: flex; flex-direction: column; align-items: center; padding-top: 15px; }
.help-scroll i { width: 19px; height: 15px; background: #cdcdcd; margin: 7px 0 10px; }
.more { height: 8px; background: #bdbdbd; display: flex; align-items: center; justify-content: center; }
.library { height: 55px; }
.lib-list { height: 9px; width: 239px; margin: 3px 0 0 1px; overflow: hidden; background: #fff; border: 1px solid #ccc; border-width: 0 1px; display: flex; align-items: flex-end; }
.lib-list svg { transform: translateY(-2px); margin-left: 1px; }
.lib-list span { margin-left: 3px; line-height: 16px; font-size: 12.5px; transform: translateY(-2px); }
.object { border-bottom: 0; }
.object-body { display: flex; height: 517px; }
.object-body > svg { margin-left: -5px; overflow: hidden; margin-right: 5px; }
.object-bar { width: 8px; background: #bdbdbd; display: flex; align-items: center; justify-content: center; }
.object-body > svg { margin: 0; }

.strip-bottom { height: 9px; flex: none; border-bottom: 1px solid #a0a0a0; padding-left: 847px; }

/* form canvas */
#canvas text { font-family: "Noto Sans CJK SC", sans-serif; font-size: 14px; }
#canvas text.head { font-weight: 400; text-anchor: middle; }
#canvas text.title { font-size: 50.5px; font-weight: 500; }
#canvas text.num, #hruler text { font: 14px "Liberation Mono", monospace; }
#canvas text.code { font: 14px "Liberation Mono", monospace; }

/* desktop taskbar */
.taskbar { position: absolute; left: 1842px; top: 0; width: 78px; height: 1080px; overflow: hidden; background: linear-gradient(#2c2e30 0, #303236 200px, #222733 330px, #2a2d31 500px, #1d222c 730px, #22252b 800px, #20242c 900px, #2f3945 1074px); color: #fff; }
.taskbar::after { content: ""; position: absolute; left: 0; right: 0; top: 1074px; height: 1px; background: #7b8087; }
.active-task { position: absolute; left: 0; top: 449px; width: 75px; height: 58px; background: #4d4f52; border-left: 4px solid #3c3f42; }
.run { position: absolute; left: 75px; width: 3px; height: 48px; background: #76b9ed; }
.r1 { top: 159px; } .r2 { top: 218px; } .r3 { top: 395px; } .r4 { top: 449px; height: 58px; } .r5 { top: 513px; }
.task-icons { position: absolute; left: 0; top: 0; }
.tray { position: absolute; left: 0; top: 795px; }
.ime { position: absolute; left: -1px; right: 1px; top: 893px; text-align: center; font-size: 20px; line-height: 28px; }
.clock { position: absolute; left: -5px; right: -3px; top: 943px; display: flex; flex-direction: column; align-items: center; font-size: 15px; line-height: 22px; }
.clock .date { font-size: 15.5px; letter-spacing: .1px; margin-right: 1px; }
.notice { position: absolute; left: 29px; top: 1034px; }
.badge { position: absolute; left: 35px; top: 1043px; width: 27px; height: 20px; border: 1px solid #999; border-radius: 10px; background: #3a3d40; font-weight: 700; font-size: 16px; line-height: 17px; text-align: center; }
```
FILE: app.js
```js
// Hierarchy tree: [depth, icon, label, expander]
const nodes = [
  [0, 'data', 'data', '-'], [1, 'masters', '(Master Pages)', '-'], [2, 'page', 'Page1', '-'],
  [3, 'main', 'MAIN'], [3, 'text', 'Text1'], [3, 'sub', 'HEADER', '+'],
  [3, 'field', 'TextField1[0]'], [3, 'field', 'TextField1[1]'],
  [3, 'cur', 'CurrentPage'], [3, 'cur', 'PageCount'], [3, 'text', 'Pages'],
  [3, 'form', 'form', '-'], [4, 'flow', 'Subform1', '-'],
  ...[0, 1, 2, 3, 4, 5, 6, 7].map(i => [5, 'text', `Text2[${i}]`]),
  [4, 'flow', 'items', '-'], [5, 'num', 'ORDER'],
  ...['MAKID', 'MAKTX', 'QUANTITY', 'UNIT', 'SAPBD', 'GYSBD', 'TEXT'].map(t => [5, 'field', t]),
  [1, 'ref', '(Referenced Objects)', '', 'sel'],
];
const colX = d => 12.5 + 19 * d;
let lines = '';
[[1, 1, 30], [2, 2, 2], [3, 3, 11], [4, 12, 21], [5, 13, 20], [5, 22, 29]].forEach(([d, a, b]) => {
  lines += `M${colX(d)} ${a * 20 + 1}V${b * 20 + 11.5}`;
});
nodes.forEach(([d], i) => { lines += `M${colX(d)} ${i * 20 + 11.5}h11`; });
const expander = e => e
  ? `<svg class="exp" viewBox="0 0 11 11"><path d="M.5.5h10v10H.5z" fill="#f7f7f7" stroke="#919191"/><path d="M2.500 5.500h6${e === '+' ? 'M5.500 2.500v6' : ''}" stroke="#2f4fa0"/></svg>`
  : '<span class="exp"></span>';
document.getElementById('tree').innerHTML =
  `<svg class="tree-lines" width="200" height="640" shape-rendering="crispEdges"><path d="${lines}" fill="none" stroke="#888" stroke-dasharray="1 1"/></svg>` +
  nodes.map(([d, ic, t, e, s]) =>
    `<div class="row d${d} ${s || ''}">${expander(e)}<svg width="16" height="16"><use href="#i-${ic}"/></svg><span class="txt">${t}</span></div>`).join('');

// Rulers: one inch is 100.8 px, eight divisions per inch
const STEP = 12.6;
const gx = k => Math.round(306.4 + STEP * k);
const gy = k => Math.floor(253.5 + STEP * k);
const tick = k => (k % 8 === 0 ? 13 : k % 4 === 0 ? 9 : 4);
let hr = '<path fill="none" stroke="#555" d="M263 282.500h1270M290.500 261v22M1484.500 263v20M813.500 261v22';
for (let k = 0; k <= 93; k++) hr += `M${gx(k) - .5} 282v-${tick(k)}`;
hr += '"/><path d="M266 266.500h22M271.500 264v14" stroke="#000"/>';
for (let n = 0; n <= 11; n++) hr += `<text x="${gx(n * 8) + 1.5}" y="274.500"${n > 9 ? ' textLength="16"' : ''}>${n}</text>`;
document.getElementById('hruler').innerHTML = hr;

// Form canvas
const O = '#ff8000', B = '#7f7fff';
let s = '<rect x="263" y="283" width="1250" height="737" fill="#fff"/>' +
  '<rect x="291" y="283" width="14" height="737" fill="url(#gPad)"/><rect x="1487" y="283" width="25" height="737" fill="url(#gPad)"/>' +
  '<path d="M1487.500 283v737" stroke="#777"/><path d="M1488.500 283v737" stroke="#999"/><path d="M1489.500 283v737" stroke="#b5b5b5"/>' +
  '<path d="M305.500 283v737M1485.500 283v737" stroke="#000"/><path d="M1486.500 283v737" stroke="#444"/>';
let vr = 'M290.500 283v737M263 823.500h28';
for (let k = 3; k <= 60; k++) vr += `M290 ${gy(k) + .5}h-${tick(k)}`;
s += `<path d="${vr}" stroke="#555"/>`;
for (let n = 1; n <= 7; n++) s += `<text class="num" x="263.500" y="${gy(n * 8) + 14.5}">${n}</text>`;
let dots = '';
for (let j = 3; j <= 60; j++) for (let i = 0; i <= 93; i++) dots += `M${gx(i)} ${gy(j)}h1v1h-1z`;
const dotLayer = `<path d="${dots}" fill="${B}"/>`;

const rect = (x, y, x2, y2, c, extra = '') => `<path d="M${x}.5 ${y}.5H${x2}.5V${y2}.5H${x}.5z" fill="none" stroke="${c}" ${extra}/>`;
const v = (x, y, y2, c) => `<path d="M${x}.5 ${y}V${y2}" stroke="${c}"/>`;
const dia = (x, y) => `<path d="M${x + .5} ${y - 2}l3 2.500-3 2.500-3-2.500z" fill="#ff7000" shape-rendering="auto"/>`;
const half = (x, y, y2) => `<path d="M${x - 1} ${y}h3v2h-3zM${x} ${y2 - 2}h1v1h1v2h-3v-2h1z" fill="#ff7000"/>`;
const label = (x, y, t, w) => `<text x="${x}" y="${y}" textLength="${w}">${t}</text>`;

s += '<path d="M331.500 1020V303.500H1460.500V1020" fill="none" stroke="#d98be6" stroke-dasharray="4 2"/>';
s += rect(772, 303, 978, 358, B) + '<text class="title" x="776" y="349.500" textLength="199">交接清单</text>';
s += rect(445, 379, 1353, 466, B, 'stroke-dasharray="4 2"');
s += rect(449, 387, 1187, 458, O) + `<path d="M449 423.500H1188" stroke="${O}"/>` + v(695, 387, 458, O) + v(941, 387, 458, O);
[552, 798, 1044].forEach(x => { s += v(x, 387, 458, '#ff7000') + half(x, 387, 458) + dia(x, 423); });
s += label(453, 408.5, '出库单号:', 62) + label(453, 444.5, '交接点:', 48);
s += label(700, 408.5, '申请部门:', 62) + label(700, 444.5, '申请人:', 48);
s += label(945, 408.5, '申请日期:', 62) + label(945, 444.5, '需求日期:', 62);

s += rect(444, 467, 1352, 488, B);
[509, 633, 772, 823, 886, 1033, 1199].forEach(x => { s += v(x, 467, 488, B); });
[[477, '序号', 28], [571.5, '物料', 27], [703, '物料编号', 56], [797.5, '数量', 28], [854, '单位', 28], [959, 'SAP批次', 52], [1115.5, '供应商批次', 70], [1274.5, '备注', 28]]
  .forEach(([x, t, w]) => { s += `<text class="head" x="${x}" y="481" textLength="${w}" lengthAdjust="spacingAndGlyphs">${t}</text>`; });
s += rect(444, 488, 1352, 524, O);
[507, 633, 772, 823, 886, 1037, 1201].forEach(x => { s += v(x, 488, 524, O); });
[[449, 503], [512, 629], [638, 768], [777, 818], [827, 881], [890, 1033], [1041, 1197], [1205, 1348]]
  .forEach(([a, b]) => { s += rect(a, 491, b, 519, '#333'); });
[449, 512, 638, 777, 1042].forEach(x => { s += v(x, 488, 524, '#ff7000') + half(x, 488, 524); });

s += rect(898, 883, 1352, 921, O) + v(1125, 883, 921, O);
[1002, 1229].forEach(x => { s += v(x, 883, 921, '#ff7000') + half(x, 883, 921); });
s += label(903, 905.5, '交接人:', 48) + label(1130, 905.5, '日期:', 34);

// Barcode: [offset, width, grey?]
const bars = [[1,1],[3,1],[6,1],[11,1],[14,3],[20,1],[21,1,1],[23,2],[26,1,1],[27,2],[31,1,1],[32,1],[35,2],[39,1],[40,1,1],[43,2],[47,1],[48,2,1],[52,1,1],[53,5],[58,2,1],[61,2],[64,1,1],[66,2],[70,1],[71,3,1],[75,2],[78,2,1],[80,2],[83,2],[86,1,1],[87,3],[91,1],[93,2],[97,1,1],[98,2],[102,1],[104,2],[108,1],[109,1,1],[112,2],[116,3],[120,1,1],[122,1],[123,1,1],[126,2],[129,1],[133,2],[138,2],[140,1],[142,1,1],[144,2,1]];
bars.forEach(([o, w, g]) => { s += `<rect x="${1201 + o}" y="395" width="${w}" height="55" fill="${g ? '#808080' : '#000'}"/>`; });
s += '<rect x="1232" y="436" width="86" height="14" fill="#fff"/>';
s += rect(1201, 396, 1347, 450, O);
s += '<text class="code" x="1232.500" y="447" textLength="84">1234567890</text>';
document.getElementById('canvas').innerHTML = s + dotLayer;
```
